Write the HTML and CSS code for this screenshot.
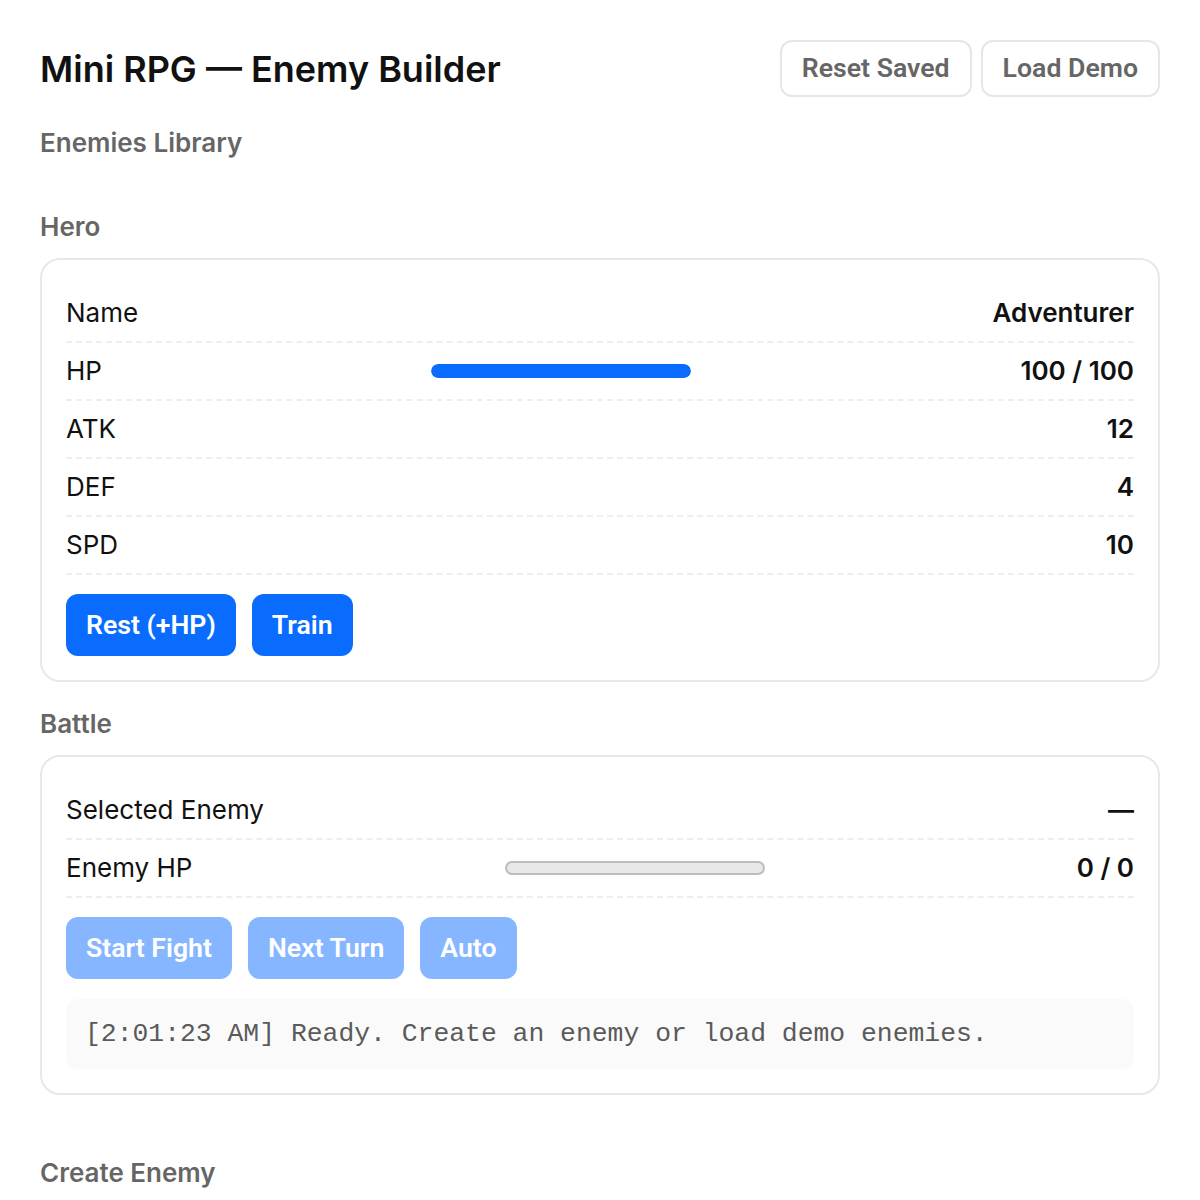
FILE: index.html
```html
<!DOCTYPE html>
<html lang="en">
<head>
<meta charset="utf-8">
<title>Mini RPG — Enemy Builder</title>
<link rel="stylesheet" href="styles.css">
</head>
<body>
  <header class="topbar">
    <h1 class="title">Mini RPG — Enemy Builder</h1>
    <div class="toolbar">
      <button class="btn btn-ghost" type="button">Reset Saved</button>
      <button class="btn btn-ghost" type="button">Load Demo</button>
    </div>
  </header>

  <main class="sections">
    <section class="section">
      <h2 class="section-title">Enemies Library</h2>
      <div class="library"></div>
    </section>

    <section class="section">
      <h2 class="section-title">Hero</h2>
      <div class="card">
        <div class="stat-row"><span class="stat-label">Name</span><span class="stat-value">Adventurer</span></div>
        <div class="stat-row">
          <span class="stat-label">HP</span>
          <div class="bar"><div class="bar-fill" style="width: 100%"></div></div>
          <span class="stat-value">100 / 100</span>
        </div>
        <div class="stat-row"><span class="stat-label">ATK</span><span class="stat-value">12</span></div>
        <div class="stat-row"><span class="stat-label">DEF</span><span class="stat-value">4</span></div>
        <div class="stat-row"><span class="stat-label">SPD</span><span class="stat-value">10</span></div>
        <div class="actions">
          <button class="btn btn-primary" type="button">Rest (+HP)</button>
          <button class="btn btn-primary" type="button">Train</button>
        </div>
      </div>
    </section>

    <section class="section">
      <h2 class="section-title">Battle</h2>
      <div class="card">
        <div class="stat-row"><span class="stat-label">Selected Enemy</span><span class="stat-value">—</span></div>
        <div class="stat-row">
          <span class="stat-label">Enemy HP</span>
          <div class="bar bar-empty"><div class="bar-fill" style="width: 0%"></div></div>
          <span class="stat-value">0 / 0</span>
        </div>
        <div class="actions">
          <button class="btn btn-primary" type="button" disabled>Start Fight</button>
          <button class="btn btn-primary" type="button" disabled>Next Turn</button>
          <button class="btn btn-primary" type="button" disabled>Auto</button>
        </div>
        <div class="log">[2:01:23 AM] Ready. Create an enemy or load demo enemies.</div>
      </div>
    </section>

    <section class="section section-create">
      <h2 class="section-title">Create Enemy</h2>
    </section>
  </main>
</body>
</html>
```

FILE: styles.css
```css
* {
  box-sizing: border-box;
}

html, body {
  margin: 0;
  background: #ffffff;
}

body {
  padding: 40px;
  font-family: Inter, "Noto Sans", sans-serif;
  color: #111111;
}

/* Page header */
.topbar {
  display: flex;
  align-items: center;
  justify-content: space-between;
  height: 57px;
  margin-bottom: 30px;
}

.title {
  margin: 0;
  font-size: 36px;
  font-weight: 600;
  line-height: 40px;
  color: #111111;
}

.toolbar {
  display: flex;
  gap: 9px;
}

/* Buttons */
.btn {
  font-family: Roboto, "Liberation Sans", sans-serif;
  font-size: 26.67px;
  font-weight: 600;
  border-radius: 12px;
  cursor: pointer;
}

.btn-ghost {
  height: 57px;
  padding: 0 20px;
  line-height: 31px;
  background: #ffffff;
  color: #666666;
  border: 2px solid #e6e6e6;
}

.btn-primary {
  height: 62px;
  padding: 0 20px;
  line-height: 32px;
  background: #0a6cff;
  color: #ffffff;
  border: 0;
}

.btn-primary:disabled {
  background: #85b6ff;
  cursor: default;
}

/* Sections */
.sections {
  display: flex;
  flex-direction: column;
  gap: 26px;
}

.section-title {
  margin: 0;
  font-size: 26px;
  font-weight: 600;
  line-height: 32px;
  color: #666666;
}

.library {
  margin-top: 16px;
  min-height: 10px;
}

.section-create {
  margin-top: 36px;
}

/* Cards */
.card {
  margin-top: 15px;
  padding: 25px 24px 24px;
  border: 2px solid #e8e8e8;
  border-radius: 20px;
  background: #ffffff;
}

.stat-row {
  display: flex;
  align-items: center;
  justify-content: space-between;
  padding: 12px 0;
  border-bottom: 2px dashed #eeeeee;
  font-size: 26px;
  line-height: 32px;
}

.stat-label {
  font-weight: 400;
  color: #111111;
}

.stat-value {
  font-weight: 600;
  color: #111111;
}

/* HP bars */
.bar {
  width: 260px;
  height: 14px;
  border-radius: 7px;
  background: #e9e9e9;
  overflow: hidden;
}

.bar-fill {
  height: 100%;
  background: #0a6cff;
  border-radius: 7px;
}

.bar-empty {
  border: 2px solid #bdbdbd;
  background: #e8e8e8;
}

.actions {
  display: flex;
  gap: 16px;
  margin-top: 19px;
}

/* Battle log */
.log {
  margin-top: 20px;
  padding: 20px 19px;
  background: #fafafa;
  border-radius: 12px;
  font-family: "Liberation Mono", "DejaVu Sans Mono", monospace;
  font-size: 26.4px;
  line-height: 30px;
  color: #5a5a5a;
  white-space: pre-wrap;
}
```
